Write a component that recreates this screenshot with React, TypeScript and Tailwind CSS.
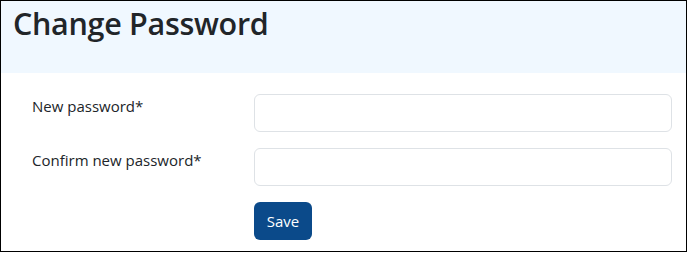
import { useState } from "react";

const App = () => {
  const [password, setPassword] = useState("");
  const [confirm, setConfirm] = useState("");

  return (
    <div className="w-[688px] h-[253px] bg-white font-['Open_Sans',sans-serif] text-[#212529]">
      <div className="w-[687px] h-[252px] border border-black flex flex-col">
        {/* Header */}
        <div className="h-[72px] bg-[#f0f8ff] px-3 pt-[3px]">
          <h1 className="text-[30.5px] leading-[38px] font-semibold tracking-[-0.3px]">Change Password</h1>
        </div>

        {/* Form */}
        <div className="flex flex-col gap-4 pt-[21px] pl-[31px] pr-[14px]">
          <div className="flex">
            <label className="w-[222px] text-[15px] leading-6">New password*</label>
            <input
              type="password"
              value={password}
              onChange={(e) => setPassword(e.target.value)}
              className="flex-1 h-[38px] rounded-md border border-[#dee2e6] bg-white px-3 outline-none"
            />
          </div>
          <div className="flex">
            <label className="w-[222px] text-[15px] leading-6">Confirm new password*</label>
            <input
              type="password"
              value={confirm}
              onChange={(e) => setConfirm(e.target.value)}
              className="flex-1 h-[38px] rounded-md border border-[#dee2e6] bg-white px-3 outline-none"
            />
          </div>
          <div className="flex">
            <div className="w-[222px]" />
            <button className="h-[38px] w-[58px] rounded-md bg-[#0b4a8a] text-white text-[15px]">Save</button>
          </div>
        </div>
      </div>
    </div>
  );
};

export default App;
